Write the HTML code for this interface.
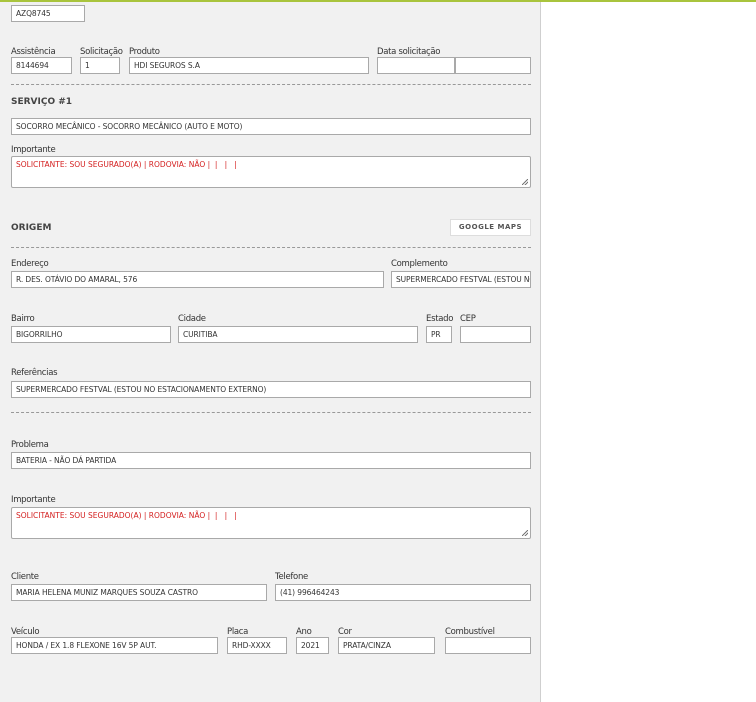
<!DOCTYPE html>
<html><head><meta charset="utf-8"><style>
body{margin:0;width:756px;height:689px;background:#fff;position:relative;overflow:hidden;font-family:"DejaVu Sans","Liberation Sans",sans-serif;}
.top{position:absolute;left:0;top:0;width:756px;height:2px;background:#a9c43d}
.panel{position:absolute;left:0;top:2px;width:540px;height:700px;background:#f1f1f1;border-right:1px solid #cfcfcf}
.l{position:absolute;font-size:8.5px;color:#333;white-space:nowrap;letter-spacing:-0.3px;margin-top:2px}
.i{position:absolute;height:16px;background:#fff;border:1px solid #a9a9a9;box-sizing:border-box;font-size:7.5px;color:#333;line-height:16px;padding-left:4px;white-space:nowrap;overflow:hidden;letter-spacing:-0.1px}
.t{position:absolute;background:#fff;border:1px solid #a9a9a9;border-radius:2px;box-sizing:border-box;font-size:7.5px;color:#d42020;padding:3px 4px;white-space:nowrap}
.t:after{content:"";position:absolute;right:2px;bottom:2px;width:6px;height:6px;background:linear-gradient(135deg,transparent 45%,#777 45%,#777 55%,transparent 55%,transparent 70%,#777 70%,#777 80%,transparent 80%)}
.h{position:absolute;font-size:9px;font-weight:bold;color:#444;margin-top:1px}
.d{position:absolute;left:11px;width:520px;border-top:1px dashed #999}
.b{position:absolute;left:450px;top:219px;width:81px;height:17px;background:#fff;border:1px solid #ddd;box-sizing:border-box;font-size:7px;font-weight:bold;color:#555;text-align:center;line-height:15px;letter-spacing:0.5px}
</style></head><body>
<div class="top"></div><div class="panel"></div>
<div class="i" style="left:11px;top:5px;width:74px;height:17px">AZQ8745</div>

<div class="l" style="left:11px;top:45px">Assistência</div>
<div class="l" style="left:80px;top:45px">Solicitação</div>
<div class="l" style="left:129px;top:45px">Produto</div>
<div class="l" style="left:377px;top:45px">Data solicitação</div>
<div class="i" style="left:11px;top:57px;width:61px;height:17px">8144694</div>
<div class="i" style="left:80px;top:57px;width:40px;height:17px">1</div>
<div class="i" style="left:129px;top:57px;width:240px;height:17px">HDI SEGUROS S.A</div>
<div class="i" style="left:377px;top:57px;width:78px;height:17px"></div>
<div class="i" style="left:455px;top:57px;width:76px;height:17px"></div>
<div class="d" style="top:84px"></div>
<div class="h" style="left:11px;top:96px">SERVIÇO #1</div>
<div class="i" style="left:11px;top:118px;width:520px;height:17px">SOCORRO MECÂNICO - SOCORRO MECÂNICO (AUTO E MOTO)</div>
<div class="l" style="left:11px;top:143px">Importante</div>
<div class="t" style="left:11px;top:156px;width:520px;height:32px">SOLICITANTE: SOU SEGURADO(A) | RODOVIA: NÃO |&nbsp; |&nbsp;&nbsp; |&nbsp;&nbsp; |</div>

<div class="h" style="left:11px;top:222px">ORIGEM</div>
<div class="b">GOOGLE MAPS</div>
<div class="d" style="top:247px"></div>
<div class="l" style="left:11px;top:257px">Endereço</div>
<div class="l" style="left:391px;top:257px">Complemento</div>
<div class="i" style="left:11px;top:271px;width:373px;height:17px">R. DES. OTÁVIO DO AMARAL, 576</div>
<div class="i" style="left:391px;top:271px;width:140px;height:17px">SUPERMERCADO FESTVAL (ESTOU NO</div>

<div class="l" style="left:11px;top:312px">Bairro</div>
<div class="l" style="left:178px;top:312px">Cidade</div>
<div class="l" style="left:426px;top:312px">Estado</div>
<div class="l" style="left:460px;top:312px">CEP</div>
<div class="i" style="left:11px;top:326px;width:160px;height:17px">BIGORRILHO</div>
<div class="i" style="left:178px;top:326px;width:240px;height:17px">CURITIBA</div>
<div class="i" style="left:426px;top:326px;width:26px;height:17px">PR</div>
<div class="i" style="left:460px;top:326px;width:71px;height:17px"></div>

<div class="l" style="left:11px;top:366px">Referências</div>
<div class="i" style="left:11px;top:381px;width:520px;height:17px">SUPERMERCADO FESTVAL (ESTOU NO ESTACIONAMENTO EXTERNO)</div>
<div class="d" style="top:412px"></div>

<div class="l" style="left:11px;top:438px">Problema</div>
<div class="i" style="left:11px;top:452px;width:520px;height:17px">BATERIA - NÃO DÁ PARTIDA</div>
<div class="l" style="left:11px;top:493px">Importante</div>
<div class="t" style="left:11px;top:507px;width:520px;height:32px">SOLICITANTE: SOU SEGURADO(A) | RODOVIA: NÃO |&nbsp; |&nbsp;&nbsp; |&nbsp;&nbsp; |</div>

<div class="l" style="left:11px;top:570px">Cliente</div>
<div class="l" style="left:275px;top:570px">Telefone</div>
<div class="i" style="left:11px;top:584px;width:256px;height:17px">MARIA HELENA MUNIZ MARQUES SOUZA CASTRO</div>
<div class="i" style="left:275px;top:584px;width:256px;height:17px">(41) 996464243</div>

<div class="l" style="left:11px;top:625px">Veículo</div>
<div class="l" style="left:227px;top:625px">Placa</div>
<div class="l" style="left:296px;top:625px">Ano</div>
<div class="l" style="left:338px;top:625px">Cor</div>
<div class="l" style="left:445px;top:625px">Combustível</div>
<div class="i" style="left:11px;top:637px;width:207px;height:17px">HONDA / EX 1.8 FLEXONE 16V 5P AUT.</div>
<div class="i" style="left:227px;top:637px;width:60px;height:17px">RHD-XXXX</div>
<div class="i" style="left:296px;top:637px;width:33px;height:17px">2021</div>
<div class="i" style="left:338px;top:637px;width:97px;height:17px">PRATA/CINZA</div>
<div class="i" style="left:445px;top:637px;width:86px;height:17px"></div>
</body></html>
